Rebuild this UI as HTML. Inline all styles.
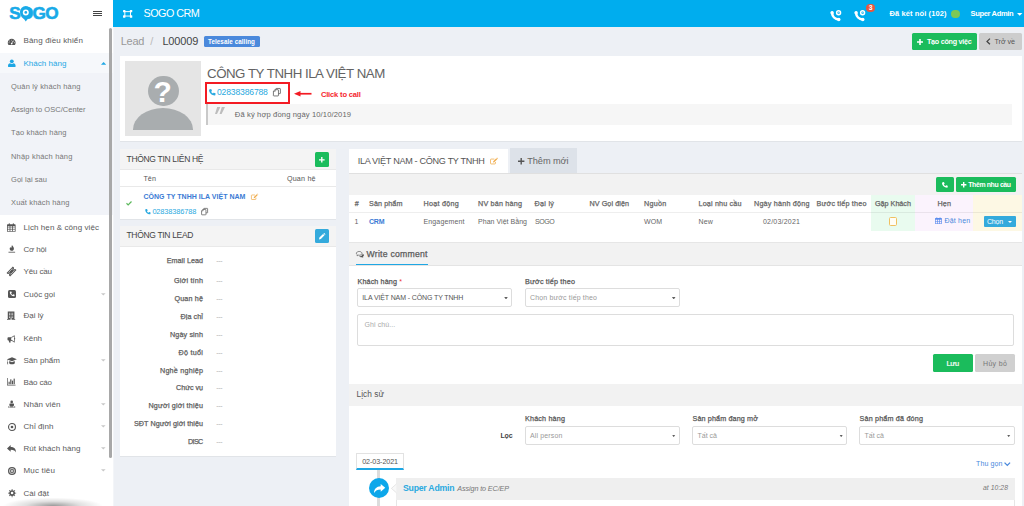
<!DOCTYPE html>
<html lang="vi">
<head>
<meta charset="utf-8">
<title>SOGO CRM - Lead L00009</title>
<style>
*{box-sizing:border-box;margin:0;padding:0}
html,body{width:1024px;height:506px;overflow:hidden}
body{position:relative;background:#edf0f5;font-family:"Liberation Sans",sans-serif;color:#666}
.b{position:absolute;display:block}
.t{position:absolute;white-space:pre;line-height:20px}
svg{position:absolute;overflow:visible}
.sel{position:absolute;height:19px;border:1px solid #ddd;border-radius:2px;background:#fff}
.sel:after{content:"";position:absolute;right:3px;top:7.600px;width:3.600px;height:2.600px;background:#606060;clip-path:polygon(0 0,100% 0,50% 100%)}
.car{position:absolute;border:2px solid transparent;border-top:2.6px solid #c5c5c5}
</style>
</head>
<body>
<!-- ===== top bar ===== -->
<div class="b" id="topbar" style="left:113px;top:0;width:911px;height:27px;background:#00adee"></div>
<div class="b" id="logobox" style="left:0;top:0;width:113px;height:27px;background:#fff"></div>
<!-- ===== sidebar ===== -->
<div class="b" id="sidebar" style="left:0;top:27px;width:114.200px;height:479px;background:#fff;border-right:1.200px solid #f3f5f8"></div>
<div class="b" id="activerow" style="left:0;top:52.5px;width:113px;height:21px;background:#f6f8fb"></div>
<div class="b" id="submenu" style="left:0;top:73px;width:113px;height:141.5px;background:#f1f3f8"></div>
<div class="b" id="sbshadow" style="left:0;top:497px;width:106px;height:9px;background:radial-gradient(ellipse 50px 8.500px at 50% 100%,rgba(0,0,0,.4),rgba(0,0,0,.12) 55%,rgba(0,0,0,0) 100%)"></div>
<div class="b" id="scroll" style="left:108.6px;top:28px;width:3.2px;height:430px;background:#a8a8a8;border-radius:2px"></div>
<div class="b" style="left:93px;top:10.5px;width:9px;height:1.3px;background:#444"></div>
<div class="b" style="left:93px;top:12.8px;width:9px;height:1.3px;background:#444"></div>
<div class="b" style="left:93px;top:15.1px;width:9px;height:1.3px;background:#444"></div>
<svg style="left:6.90px;top:37.90px;width:9.40px;height:7.40px" viewBox="0 0 16 15" ><path fill="#555" d="M8 1.5C3.6 1.5 0 5.1 0 9.5c0 1.6.5 3.200 1.300 4.400.2.300.5.400.8.400h11.800c.3 0 .6-.1.8-.4.8-1.200 1.300-2.800 1.300-4.400C16 5.100 12.400 1.500 8 1.500z"/><circle cx="8" cy="4.300" r="1" fill="#fff"/><circle cx="4" cy="6" r="1" fill="#fff"/><circle cx="12" cy="6" r="1" fill="#fff"/><circle cx="2.600" cy="9.700" r="1" fill="#fff"/><circle cx="13.400" cy="9.700" r="1" fill="#fff"/><path d="M8 11.500L10.500 6" stroke="#fff" stroke-width="1.400" fill="none"/><circle cx="8" cy="11.300" r="1.700" fill="#fff"/></svg>
<svg style="left:7.80px;top:59.10px;width:7.60px;height:8.20px" viewBox="0 0 16 16" ><circle cx="8" cy="4.200" r="4" fill="#1ea7e4"/><path fill="#1ea7e4" d="M1 16c-.6 0-1-.4-1-1v-1.600C0 10.500 2 8.700 4.300 8.500c1 .8 2.300 1.200 3.700 1.200s2.700-.4 3.700-1.200C14 8.700 16 10.500 16 13.400V15c0 .6-.4 1-1 1z"/></svg>
<svg style="left:101px;top:62.3px;width:5.2px;height:2.8px" viewBox="0 0 10 5"><path fill="#1ea7e4" d="M5 0l5 5H0z"/></svg>
<svg style="left:7.40px;top:222.50px;width:8.60px;height:9.00px" viewBox="0 0 16 16" ><path fill="#555" d="M1.200 2h13.600c.7 0 1.200.5 1.200 1.200v11.600c0 .7-.5 1.200-1.200 1.200H1.200C.5 16 0 15.500 0 14.800V3.200C0 2.500.5 2 1.200 2z"/><rect x="3.200" y="0" width="2" height="4" rx="1" fill="#555"/><rect x="10.800" y="0" width="2" height="4" rx="1" fill="#555"/><g fill="#fff"><rect x="1.400" y="5.800" width="3.400" height="2.400"/><rect x="6.300" y="5.800" width="3.400" height="2.400"/><rect x="11.200" y="5.800" width="3.400" height="2.400"/><rect x="1.400" y="9.200" width="3.400" height="2.400"/><rect x="6.300" y="9.200" width="3.400" height="2.400"/><rect x="11.200" y="9.200" width="3.400" height="2.400"/><rect x="1.400" y="12.600" width="3.400" height="2.200"/><rect x="6.300" y="12.600" width="3.400" height="2.200"/><rect x="11.200" y="12.600" width="3.400" height="2.200"/></g></svg>
<svg style="left:7.50px;top:244.40px;width:7.60px;height:9.60px" viewBox="0 0 16 16" ><path fill="#555" d="M8.500 0C9 2.500 12.500 4 12.500 7.800c0 2.600-2 4.400-4.500 4.400S3.500 10.400 3.500 7.800c0-1.600.8-2.800 1.800-3.800 0 1.200.6 2 1.400 2C8.200 6 6.800 3 8.500 0z"/><rect x="1" y="14.300" width="14" height="1.700" fill="#555"/></svg>
<svg style="left:7.20px;top:267.00px;width:9.00px;height:9.00px" viewBox="0 0 16 16" ><g transform="rotate(-45 8 8)"><path fill="#555" d="M0 3.500h16v3a1.500 1.500 0 000 3v3H0v-3a1.500 1.500 0 000-3z"/><rect x="3.500" y="5.500" width="9" height="5" fill="none" stroke="#fff" stroke-width=".9"/></g></svg>
<svg style="left:7.60px;top:290.00px;width:8.00px;height:8.00px" viewBox="0 0 16 16" ><rect x="0" y="0" width="16" height="16" rx="3" fill="#555"/><path fill="#fff" d="M4 3.300l2-.5c.3-.1.500.1.600.3l.9 2.200c.1.200 0 .5-.2.600L6.200 6.800c.7 1.400 1.800 2.500 3.100 3.100l.900-1.100c.2-.2.400-.3.600-.2l2.200.9c.2.100.4.300.3.600l-.5 2c-.1.200-.3.400-.5.400C7.500 12.500 3.600 8.600 3.600 3.800c0-.2.200-.4.400-.5z"/></svg>
<svg style="left:7.40px;top:311.30px;width:8.20px;height:9.40px" viewBox="0 0 16 16" ><path fill="#555" d="M1.500 0h13v14.500H16V16H0v-1.500h1.500z"/><g fill="#fff"><rect x="4" y="2.4" width="1.700" height="1.500"/><rect x="7.15" y="2.4" width="1.700" height="1.500"/><rect x="10.3" y="2.4" width="1.700" height="1.500"/><rect x="4" y="5.2" width="1.700" height="1.500"/><rect x="7.15" y="5.2" width="1.700" height="1.500"/><rect x="10.3" y="5.2" width="1.700" height="1.500"/><rect x="4" y="8" width="1.700" height="1.500"/><rect x="7.15" y="8" width="1.700" height="1.500"/><rect x="10.3" y="8" width="1.700" height="1.500"/><rect x="4" y="10.8" width="1.700" height="1.500"/><rect x="7.15" y="10.8" width="1.700" height="1.500"/><rect x="10.3" y="10.8" width="1.700" height="1.500"/><rect x="6.800" y="13.200" width="2.400" height="2.800"/></g></svg>
<svg style="left:7.30px;top:334.60px;width:9.00px;height:8.00px" viewBox="0 0 16 15" ><path fill="#555" d="M13 0.500c.6 0 1 .4 1 1v4.300c.6.200 1 .7 1 1.400s-.4 1.200-1 1.400v4.300c0 .6-.4 1-1 1-2-1.800-4.200-3-6.800-3.300-.4.600-.3 1.300.100 1.800.3.400.3.800 0 1.100l-.8.800c-.3.300-.8.300-1.100 0C3.200 13 2.700 11.600 3 10.500H2c-.8 0-1.500-.7-1.500-1.500V5.500C.5 4.700 1.200 4 2 4h4C8.700 3.800 11 2.400 13 .5z"/><path fill="#fff" d="M12.800 2.300v9.800C11.200 10.800 9.400 9.900 7.500 9.600V4.900C9.400 4.600 11.200 3.700 12.800 2.300z"/></svg>
<svg style="left:6.70px;top:356.80px;width:10.00px;height:7.60px" viewBox="0 0 16 12.500" ><path fill="#555" d="M8 .5L16 3.800 8 7.200 1.200 4.400V8c.3.200.5.500.5.900 0 .3-.2.600-.4.800L1.800 12H0l.5-2.300C.2 9.500.1 9.200.1 8.900c0-.4.200-.7.500-.9V4.100L0 3.800z"/><path fill="#555" d="M3.600 6.700L8 8.500l4.400-1.800.3 3.100C12.700 11 10.600 12 8 12s-4.700-1-4.700-2.200z"/></svg>
<svg style="left:7.30px;top:378.30px;width:8.60px;height:7.40px" viewBox="0 0 16 14" ><path fill="#555" d="M0 0h1.300v12.700H16V14H0z"/><rect x="2.800" y="7" width="2.200" height="4.700" fill="#555"/><rect x="6" y="2.500" width="2.200" height="9.200" fill="#555"/><rect x="9.200" y="5" width="2.200" height="6.700" fill="#555"/><rect x="12.400" y="1.200" width="2.200" height="10.500" fill="#555"/></svg>
<svg style="left:7.90px;top:399.90px;width:7.40px;height:8.60px" viewBox="0 0 16 16" ><circle cx="8" cy="2.800" r="2.800" fill="#555"/><path fill="#555" d="M4.300 6.500h7.400c.8 0 1.300.6 1.300 1.300v3.200h-1.500V13.500h-7V11H3V7.800c0-.7.500-1.300 1.300-1.300z"/><path fill="#555" d="M3.300 11.500v1.200C2 13 1.500 13.300 1.500 13.600c0 .6 2.800 1.200 6.500 1.200s6.500-.6 6.500-1.200c0-.3-.5-.6-1.800-.9v-1.200c2 .4 3.300 1.100 3.300 2.100C16 15.200 12.400 16 8 16s-8-.8-8-2.400c0-1 1.300-1.700 3.300-2.100z"/></svg>
<svg style="left:7.60px;top:422.60px;width:8.00px;height:8.00px" viewBox="0 0 16 16" ><circle cx="8" cy="8" r="6.900" fill="none" stroke="#555" stroke-width="2.200"/><circle cx="8" cy="8" r="2.700" fill="#555"/></svg>
<svg style="left:7.20px;top:444.60px;width:9.00px;height:7.60px" viewBox="0 0 16 13.500" ><path fill="#555" d="M6.500 0v3.500C12.500 3.500 16 6 16 13.500c-1.500-3.500-4-5-9.500-5V12L0 6z"/></svg>
<svg style="left:7.60px;top:466.60px;width:8.00px;height:8.00px" viewBox="0 0 16 16" ><circle cx="8" cy="8" r="8" fill="#555"/><circle cx="8" cy="8" r="5.200" fill="none" stroke="#fff" stroke-width="1.300"/><circle cx="8" cy="8" r="2.600" fill="#fff"/><circle cx="8" cy="8" r="1.300" fill="#555"/></svg>
<svg style="left:7.50px;top:488.90px;width:8.20px;height:8.20px" viewBox="0 0 16 16" ><polygon fill="#555" points="15.95,7.15 15.95,8.85 13.77,8.62 12.51,11.64 14.23,13.02 13.02,14.23 11.64,12.51 8.62,13.77 8.85,15.95 7.15,15.95 7.38,13.77 4.36,12.51 2.98,14.23 1.77,13.02 3.49,11.64 2.23,8.62 0.05,8.85 0.05,7.15 2.23,7.38 3.49,4.36 1.77,2.98 2.98,1.77 4.36,3.49 7.38,2.23 7.15,0.05 8.85,0.05 8.62,2.23 11.64,3.49 13.02,1.77 14.23,2.98 12.51,4.36 13.77,7.38"/><circle cx="8" cy="8" r="2.500" fill="#fff"/></svg>
<svg style="left:101.3px;top:292.8px;width:4.6px;height:2.6px" viewBox="0 0 10 5"><path fill="#c8c8c8" d="M0 0h10L5 5z"/></svg>
<svg style="left:101.3px;top:358.8px;width:4.6px;height:2.6px" viewBox="0 0 10 5"><path fill="#c8c8c8" d="M0 0h10L5 5z"/></svg>
<svg style="left:101.3px;top:403.3px;width:4.6px;height:2.6px" viewBox="0 0 10 5"><path fill="#c8c8c8" d="M0 0h10L5 5z"/></svg>
<svg style="left:101.3px;top:425.3px;width:4.6px;height:2.6px" viewBox="0 0 10 5"><path fill="#c8c8c8" d="M0 0h10L5 5z"/></svg>
<svg style="left:101.3px;top:447.3px;width:4.6px;height:2.6px" viewBox="0 0 10 5"><path fill="#c8c8c8" d="M0 0h10L5 5z"/></svg>
<svg style="left:101.3px;top:469.3px;width:4.6px;height:2.6px" viewBox="0 0 10 5"><path fill="#c8c8c8" d="M0 0h10L5 5z"/></svg>

<!-- ===== main ===== -->
<!-- breadcrumb badge + buttons -->
<div class="b" id="badge" style="left:204px;top:36.4px;width:55.5px;height:10.4px;background:#4a89dc;border-radius:1.5px"></div>
<div class="b" id="btn-task" style="left:911.6px;top:32.5px;width:65.8px;height:17.3px;background:#1bbc5c;border-radius:1.5px"></div>
<div class="b" id="btn-back" style="left:978.8px;top:32.5px;width:42.8px;height:17.3px;background:#cdcdcd;border-radius:1.5px"></div>
<!-- profile card -->
<div class="b" id="profile" style="left:120.3px;top:56px;width:901.7px;height:86.2px;background:#fff;border-bottom:1px solid #e1e4e8"></div>
<div class="b" id="avatar" style="left:125.2px;top:61.1px;width:75.7px;height:75.4px;background:#e5e5e5;overflow:hidden">
  <div class="b" style="left:22.7px;top:14.5px;width:30.8px;height:30.8px;border-radius:50%;background:#a9adaf"></div>
  <div class="b" style="left:8.1px;top:47.2px;width:60px;height:42.800px;border-radius:50%;background:#a9adaf"></div>
  <div class="b" style="left:0;top:68.6px;width:76px;height:8px;background:#e5e5e5"></div>
</div>
<div class="b" id="quote" style="left:206.4px;top:103.5px;width:805.3px;height:21.1px;background:#f6f6f6;border-left:2.300px solid #c9c9c9"></div>
<div class="b" id="redbox" style="left:205px;top:81.700px;width:85px;height:22px;border:2px solid #f31b23"></div>
<!-- contact panel -->
<div class="b" id="p-contact" style="left:119.8px;top:149px;width:216.100px;height:71px;background:#fff;border-bottom:1px solid #e1e4e8"></div>
<div class="b" style="left:119.8px;top:149px;width:216.100px;height:21px;background:#f4f4f4;border-bottom:1px solid #e9e9e9"></div>
<div class="b" style="left:119.8px;top:186px;width:216.100px;height:1px;background:#e9e9e9"></div>
<div class="b" id="btn-add" style="left:315px;top:152.3px;width:14.4px;height:14.6px;background:#1bbc5c;border-radius:1.5px"></div>
<!-- lead panel -->
<div class="b" id="p-lead" style="left:119.8px;top:226px;width:216.100px;height:230.5px;background:#fff;border-bottom:1px solid #e1e4e8"></div>
<div class="b" style="left:119.8px;top:226px;width:216.100px;height:21px;background:#f4f4f4;border-bottom:1px solid #e9e9e9"></div>
<div class="b" id="btn-edit" style="left:314.6px;top:228.7px;width:14.8px;height:14.8px;background:#34aadc;border-radius:1.5px"></div>
<!-- tabs -->
<div class="b" id="tab1" style="left:349.2px;top:149.1px;width:159.1px;height:24.5px;background:#fff"></div>
<div class="b" id="tab2" style="left:510px;top:148.400px;width:67.4px;height:24.900px;background:#dde2e9"></div>
<div class="b" id="tabpane" style="left:349px;top:173.2px;width:673px;height:332.8px;background:#f2f2f2;border-top:1px solid #e0e0e0"></div>
<div class="b" id="btn-phone" style="left:936px;top:177.3px;width:18.2px;height:15px;background:#1bbc5c;border-radius:1.5px"></div>
<div class="b" id="btn-need" style="left:956.2px;top:177.3px;width:59.7px;height:15px;background:#1bbc5c;border-radius:1.5px"></div>
<!-- table -->
<div class="b" id="tbl" style="left:349px;top:194.9px;width:673px;height:47.1px;background:#fff"></div>
<div class="b" style="left:871px;top:194.9px;width:43.8px;height:35.7px;background:#e9fbef"></div>
<div class="b" style="left:914.8px;top:194.9px;width:58.2px;height:35.7px;background:#fbf3fd"></div>
<div class="b" style="left:973px;top:194.9px;width:49px;height:35.7px;background:#fdf8e4"></div>
<div class="b" style="left:349px;top:212.2px;width:673px;height:1px;background:rgba(0,0,0,.065)"></div>
<div class="b" id="chk" style="left:888.7px;top:217.2px;width:8.7px;height:8.7px;border:1.2px solid #f0c060;border-radius:1.6px;background:#fffdf6"></div>
<div class="b" id="btn-chon" style="left:984px;top:215.8px;width:32.3px;height:11.7px;background:#34aadc;border-radius:1px"></div>
<!-- write comment -->
<div class="b" style="left:349px;top:242px;width:673px;height:1px;background:#e6e6e6"></div>
<div class="b" id="wc-body" style="left:349px;top:265px;width:673px;height:119px;background:#fff;border-top:1px solid #e4e4e4"></div>
<div class="b" id="wc-line" style="left:355.7px;top:263.5px;width:72.3px;height:1.5px;background:#1ea7e4"></div>
<div class="sel" style="left:357.3px;top:288.3px;width:154.5px"></div>
<div class="sel" style="left:525px;top:288.3px;width:154.5px"></div>
<div class="b" id="txtarea" style="left:357.3px;top:314px;width:657px;height:31.5px;border:1px solid #ddd;border-radius:2px;background:#fff"></div>
<div class="b" id="btn-save" style="left:932.5px;top:354.100px;width:40.2px;height:17.900px;background:#1bbc5c;border-radius:1.5px"></div>
<div class="b" id="btn-cancel" style="left:975px;top:354.100px;width:40.200px;height:17.900px;background:#d0d0d0;border-radius:1.5px"></div>
<!-- history -->
<div class="b" id="hist-body" style="left:349px;top:405.5px;width:673px;height:100.5px;background:#fff"></div>
<div class="sel" style="left:525px;top:426px;width:154.5px"></div>
<div class="sel" style="left:692px;top:426px;width:155px"></div>
<div class="sel" style="left:859px;top:426px;width:155.500px"></div>
<div class="b" id="tl-line" style="left:377.4px;top:470px;width:2.6px;height:36px;background:#dcdcdc"></div>
<div class="b" id="datebox" style="left:355.7px;top:453.3px;width:48.700px;height:17px;border:1px solid #e2e2e2;border-bottom:2px solid #1ea7e4;background:#fff"></div>
<div class="b" id="entry" style="left:396.2px;top:478.1px;width:618.4px;height:28px;background:#fff;border-left:1px solid #e6e6e6;border-right:1px solid #e6e6e6"></div>
<div class="b" id="entry-h" style="left:396.2px;top:478.1px;width:618.4px;height:21.700px;background:#efefef"></div>
<svg style="left:391.200px;top:483.800px;width:5.400px;height:8.800px" viewBox="0 0 5.400 8.800"><path d="M5.400 0L.4 4.400l5 4.400" fill="#f8f8f8" stroke="#dcdcdc" stroke-width=".7"/></svg>
<div class="b" id="tl-dot" style="left:368.8px;top:478.3px;width:20.200px;height:20.200px;border-radius:50%;background:#0da7ea"></div>

<!-- header frame icon -->
<svg style="left:122.7px;top:10.2px;width:9.3px;height:7.7px" viewBox="0 0 18 15"><rect x="3.500" y="3.200" width="11" height="8.600" fill="none" stroke="#fff" stroke-width="1.900"/><rect x="0" y="0" width="4.600" height="4.600" rx="1" fill="#fff"/><rect x="13.400" y="0" width="4.600" height="4.600" rx="1" fill="#fff"/><rect x="0" y="10.400" width="4.600" height="4.600" rx="1" fill="#fff"/><rect x="13.400" y="10.400" width="4.600" height="4.600" rx="1" fill="#fff"/></svg>
<!-- header phones -->
<svg style="left:829.8px;top:9.5px;width:12px;height:12px" viewBox="0 0 12 12"><path d="M2 2.800C2.300 6.200 5 9.200 8.800 9.600" fill="none" stroke="#fff" stroke-width="2.500" stroke-linecap="round"/><circle cx="2.100" cy="2.800" r="1.700" fill="#fff"/><circle cx="8.800" cy="9.500" r="1.700" fill="#fff"/><circle cx="8.600" cy="2.800" r="1.950" fill="none" stroke="#fff" stroke-width="1.500"/><path d="M7.800 3.300L9.400 2.100" stroke="#fff" stroke-width=".7" fill="none"/></svg>
<svg style="left:854.1px;top:9.5px;width:12px;height:12px" viewBox="0 0 12 12"><path d="M2 2.800C2.300 6.200 5 9.200 8.800 9.600" fill="none" stroke="#fff" stroke-width="2.500" stroke-linecap="round"/><circle cx="2.100" cy="2.800" r="1.700" fill="#fff"/><circle cx="8.800" cy="9.500" r="1.700" fill="#fff"/><circle cx="8.600" cy="2.800" r="1.950" fill="none" stroke="#fff" stroke-width="1.500"/><path d="M7.800 3.300L9.400 2.100" stroke="#fff" stroke-width=".7" fill="none"/></svg>
<div class="b" id="hbadge" style="left:866.2px;top:4.3px;width:8.900px;height:7.900px;border-radius:4px;background:#e9573f"></div>
<div class="b" id="gdot" style="left:951.4px;top:9.9px;width:8.2px;height:8.2px;border-radius:50%;background:#7dc855"></div>
<svg style="left:1017.1px;top:12.5px;width:5.4px;height:2.800px" viewBox="0 0 10 5"><path fill="#fff" d="M0 0h10L5 5z"/></svg>
<!-- phone (profile) -->
<svg style="left:208.600px;top:88.900px;width:6.600px;height:6.600px" viewBox="0 0 16 16"><path fill="#29a9e0" d="M1.500 1.100L4.500.200c.5-.1.900.1 1.100.5l1.500 3.400c.2.400 0 .9-.3 1.100L5 6.600c1.100 2.100 2.600 3.600 4.600 4.600l1.400-1.800c.3-.3.700-.4 1.100-.3l3.400 1.500c.4.200.6.600.5 1.100l-.9 3.300c-.1.400-.5.700-.9.700C6.500 15.700 0 9.200 0 2c0-.4.300-.8.700-.9z"/></svg>
<!-- copy (profile) -->
<svg style="left:273.4px;top:88.3px;width:7.8px;height:8.4px" viewBox="0 0 15 16"><path d="M5.500 3.500V1.300c0-.3.200-.5.500-.5h7.700c.3 0 .5.200.5.500v9c0 .3-.2.500-.5.500H10.500" fill="none" stroke="#555" stroke-width="1.500"/><path d="M1.300 5.500L3.800 3.200h6.200c.3 0 .5.200.5.500v11c0 .3-.2.500-.5.500H1.300c-.3 0-.5-.2-.5-.5V6z" fill="#fff" stroke="#555" stroke-width="1.500"/><path d="M4.300 3.500v2.800H1" fill="none" stroke="#555" stroke-width="1.200"/></svg>
<!-- red arrow -->
<svg style="left:293.900px;top:91.200px;width:17.500px;height:5.500px" viewBox="0 0 17.500 5.500"><path d="M0 2.750L6.500 0v5.500z" fill="#f31b23"/><rect x="5" y="1.900" width="12.500" height="1.700" fill="#f31b23"/></svg>
<!-- quote -->
<svg style="left:215.3px;top:107.3px;width:9.4px;height:7.1px" viewBox="0 0 9.400 7.100"><path fill="#bdbdbd" d="M2.200 0h3.200L2 7.100H0zM6.800 0H10L6.600 7.100H4.600z"/></svg>
<!-- plus in green button -->
<svg style="left:319.4px;top:156.8px;width:5.6px;height:5.6px" viewBox="0 0 10 10"><path fill="#fff" d="M3.800 0h2.400v3.800H10v2.400H6.200V10H3.800V6.200H0V3.800h3.800z"/></svg>
<!-- pencil in blue button -->
<svg style="left:318.8px;top:232.9px;width:6.4px;height:6.4px" viewBox="0 0 10 10"><path fill="#fff" d="M0 10l.6-2.900L6.300 1.400l2.300 2.300-5.700 5.700zM7 .7l.5-.5c.3-.3.800-.3 1.100 0l1.200 1.200c.3.300.3.800 0 1.100l-.5.500z"/></svg>
<!-- check -->
<svg style="left:125.9px;top:200.6px;width:6px;height:4.6px" viewBox="0 0 12 9"><path fill="none" stroke="#5cb85c" stroke-width="2.400" d="M1 4.500L4.300 7.600 11 1"/></svg>
<!-- edit (contact) -->
<svg style="left:251px;top:194px;width:7.4px;height:5.9px" viewBox="0 0 15 12"><path fill="none" stroke="#f0ad4e" stroke-width="1.500" d="M10 7.500v2.700c0 .6-.4 1-1 1H1.800c-.6 0-1-.4-1-1V3c0-.6.400-1 1-1H8"/><path fill="#f0ad4e" d="M5.500 8.500l.4-2.300L11.600.5l1.900 1.900-5.700 5.700zM12.300-.2l.7-.7 1.900 1.900-.7.700z"/></svg>
<!-- phone (contact) -->
<svg style="left:144.5px;top:208.5px;width:5.9px;height:5.4px" viewBox="0 0 16 16"><path fill="#29a9e0" d="M1.500 1.100L4.500.200c.5-.1.900.1 1.100.5l1.500 3.400c.2.400 0 .9-.3 1.100L5 6.600c1.100 2.100 2.600 3.600 4.600 4.600l1.400-1.800c.3-.3.700-.4 1.100-.3l3.400 1.500c.4.200.6.600.5 1.100l-.9 3.300c-.1.400-.5.700-.9.700C6.500 15.700 0 9.200 0 2c0-.4.300-.8.700-.9z"/></svg>
<!-- copy (contact) -->
<svg style="left:201.1px;top:207.6px;width:7.2px;height:7.2px" viewBox="0 0 15 16"><path d="M5.500 3.500V1.300c0-.3.200-.5.500-.5h7.700c.3 0 .5.200.5.500v9c0 .3-.2.500-.5.500H10.500" fill="none" stroke="#555" stroke-width="1.600"/><path d="M1.300 5.500L3.800 3.200h6.200c.3 0 .5.200.5.500v11c0 .3-.2.500-.5.500H1.300c-.3 0-.5-.2-.5-.5V6z" fill="#fff" stroke="#555" stroke-width="1.600"/><path d="M4.300 3.500v2.800H1" fill="none" stroke="#555" stroke-width="1.300"/></svg>
<!-- edit (tab) -->
<svg style="left:489.7px;top:157.5px;width:8.2px;height:6.4px" viewBox="0 0 15 12"><path fill="none" stroke="#f0ad4e" stroke-width="1.500" d="M10 7.500v2.700c0 .6-.4 1-1 1H1.800c-.6 0-1-.4-1-1V3c0-.6.400-1 1-1H8"/><path fill="#f0ad4e" d="M5.500 8.500l.4-2.300L11.600.5l1.900 1.900-5.700 5.700zM12.300-.2l.7-.7 1.900 1.900-.7.700z"/></svg>
<!-- plus (tab2) -->
<svg style="left:518.4px;top:157.600px;width:6.400px;height:6.400px" viewBox="0 0 10 10"><path fill="#555" d="M3.900 0h2.200v3.900H10v2.200H6.100V10H3.900V6.100H0V3.900h3.900z"/></svg>
<!-- phone in green button -->
<svg style="left:942.2px;top:181.9px;width:5.8px;height:5.8px" viewBox="0 0 16 16"><path fill="#fff" d="M1.500 1.100L4.500.200c.5-.1.900.1 1.100.5l1.500 3.400c.2.400 0 .9-.3 1.100L5 6.600c1.100 2.100 2.600 3.600 4.600 4.600l1.400-1.800c.3-.3.700-.4 1.100-.3l3.400 1.500c.4.200.6.600.5 1.100l-.9 3.300c-.1.400-.5.700-.9.700C6.500 15.700 0 9.200 0 2c0-.4.300-.8.700-.9z"/></svg>
<!-- plus (them nhu cau) -->
<svg style="left:960.9px;top:182.1px;width:5.4px;height:5.4px" viewBox="0 0 10 10"><path fill="#fff" d="M3.700 0h2.600v3.700H10v2.600H6.300V10H3.700V6.300H0V3.700h3.700z"/></svg>
<!-- plus (tao cong viec) -->
<svg style="left:917.2px;top:38.600px;width:6px;height:6px" viewBox="0 0 10 10"><path fill="#fff" d="M3.700 0h2.600v3.700H10v2.600H6.300V10H3.700V6.300H0V3.700h3.700z"/></svg>
<!-- chevron left (tro ve) -->
<svg style="left:985.7px;top:38.100px;width:4.600px;height:6.800px" viewBox="0 0 7 10"><path fill="none" stroke="#444" stroke-width="2" d="M6 .8L1.600 5 6 9.200"/></svg>
<!-- calendar (dat hen) -->
<svg style="left:934.8px;top:216.6px;width:6.900px;height:7.300px" viewBox="0 0 16 16"><path fill="#5b8def" d="M1.200 2h13.600c.7 0 1.200.5 1.200 1.200v11.600c0 .7-.5 1.200-1.200 1.200H1.200C.5 16 0 15.500 0 14.800V3.200C0 2.500.5 2 1.200 2z"/><rect x="3.200" y="0" width="2.200" height="4" rx="1" fill="#5b8def"/><rect x="10.600" y="0" width="2.200" height="4" rx="1" fill="#5b8def"/><g fill="#fbf0fc"><rect x="1.500" y="5.800" width="3.300" height="3.800"/><rect x="6.300" y="5.800" width="3.400" height="3.800"/><rect x="11.200" y="5.800" width="3.300" height="3.800"/><rect x="1.500" y="10.800" width="3.300" height="3.700"/><rect x="6.300" y="10.800" width="3.400" height="3.700"/><rect x="11.200" y="10.800" width="3.300" height="3.700"/></g></svg>
<!-- caret (chon) -->
<svg style="left:1007.8px;top:221px;width:4px;height:2.200px" viewBox="0 0 10 5"><path fill="#fff" d="M0 0h10L5 5z"/></svg>
<!-- comments icon -->
<svg style="left:355.7px;top:250.7px;width:8.300px;height:6.500px" viewBox="0 0 17 13"><path fill="none" stroke="#555" stroke-width="1.400" d="M6.500.8c3.200 0 5.700 1.700 5.700 3.900S9.700 8.600 6.500 8.600c-.6 0-1.200-.1-1.700-.2-.8.600-1.800 1-2.800 1.100.5-.5.900-1.100 1-1.700C1.700 7.100.8 6 .8 4.700.8 2.500 3.300.8 6.500.8z"/><path fill="#555" d="M13.500 5.500c1.600.7 2.700 1.900 2.700 3.300 0 1.200-.8 2.300-2.100 3 .1.600.5 1.200 1 1.700-1-.1-2-.5-2.800-1.100-.5.100-1.100.2-1.700.2-1.900 0-3.600-.7-4.600-1.700 4.200.2 7.500-2 7.500-5.400z"/></svg>
<!-- chevron down (thu gon) -->
<svg style="left:1003.8px;top:461.5px;width:6.6px;height:4.600px" viewBox="0 0 10 7"><path fill="none" stroke="#4a89dc" stroke-width="2" d="M.8 1l4.200 4.200L9.200 1"/></svg>
<!-- share arrow in circle -->
<svg style="left:373.7px;top:484px;width:11.3px;height:9.1px" viewBox="0 0 16 13"><path fill="#fff" d="M9.500 0L16 5.500 9.500 11V7.700C5 7.700 2 9 0 13c0-6 3.500-9.300 9.500-9.700z"/></svg>

<span class="t" style="left:9.30px;top:3px;font-size:17.2px;color:#19aae8;font-weight:700;letter-spacing:-0.765px;-webkit-text-stroke:0.6px #19aae8;">SOGO</span>
<span class="t" style="left:143.60px;top:3px;font-size:10.8px;color:#fff;letter-spacing:-0.545px;">SOGO CRM</span>
<span class="t" style="left:889.50px;top:4px;font-size:7.5px;color:#fff;font-weight:700;letter-spacing:0.101px;">Đã kết nối (102)</span>
<span class="t" style="left:970.50px;top:4px;font-size:7.5px;color:#fff;font-weight:700;letter-spacing:-0.324px;">Super Admin</span>
<span class="t" style="left:868.81px;top:-2px;font-size:6.8px;color:#fff;font-weight:700;">3</span>
<span class="t" style="left:23.50px;top:31px;font-size:8px;color:#5a5a5a;letter-spacing:0.145px;">Bảng điều khiển</span>
<span class="t" style="left:23.50px;top:54px;font-size:8px;color:#1ea7e4;letter-spacing:0.031px;">Khách hàng</span>
<span class="t" style="left:11.00px;top:77px;font-size:7.5px;color:#777;letter-spacing:0.159px;">Quản lý khách hàng</span>
<span class="t" style="left:11.00px;top:100px;font-size:7.5px;color:#777;letter-spacing:0.037px;">Assign to OSC/Center</span>
<span class="t" style="left:11.00px;top:123px;font-size:7.5px;color:#777;letter-spacing:0.126px;">Tạo khách hàng</span>
<span class="t" style="left:11.00px;top:147px;font-size:7.5px;color:#777;letter-spacing:0.186px;">Nhập khách hàng</span>
<span class="t" style="left:11.00px;top:170px;font-size:7.5px;color:#777;letter-spacing:0.054px;">Gọi lại sau</span>
<span class="t" style="left:11.00px;top:193px;font-size:7.5px;color:#777;letter-spacing:0.152px;">Xuất khách hàng</span>
<span class="t" style="left:23.50px;top:218px;font-size:8px;color:#5a5a5a;letter-spacing:0.086px;">Lịch hẹn &amp; công việc</span>
<span class="t" style="left:23.50px;top:240px;font-size:8px;color:#5a5a5a;letter-spacing:-0.168px;">Cơ hội</span>
<span class="t" style="left:23.50px;top:262px;font-size:8px;color:#5a5a5a;letter-spacing:-0.132px;">Yêu cầu</span>
<span class="t" style="left:23.50px;top:285px;font-size:8px;color:#5a5a5a;letter-spacing:-0.010px;">Cuộc gọi</span>
<span class="t" style="left:23.50px;top:306px;font-size:8px;color:#5a5a5a;">Đại lý</span>
<span class="t" style="left:23.50px;top:329px;font-size:8px;color:#5a5a5a;letter-spacing:-0.054px;">Kênh</span>
<span class="t" style="left:23.50px;top:351px;font-size:8px;color:#5a5a5a;">Sản phẩm</span>
<span class="t" style="left:23.50px;top:373px;font-size:8px;color:#5a5a5a;letter-spacing:-0.132px;">Báo cáo</span>
<span class="t" style="left:23.50px;top:395px;font-size:8px;color:#5a5a5a;letter-spacing:0.114px;">Nhân viên</span>
<span class="t" style="left:23.50px;top:417px;font-size:8px;color:#5a5a5a;letter-spacing:0.085px;">Chỉ định</span>
<span class="t" style="left:23.50px;top:439px;font-size:8px;color:#5a5a5a;letter-spacing:0.071px;">Rút khách hàng</span>
<span class="t" style="left:23.50px;top:461px;font-size:8px;color:#5a5a5a;letter-spacing:0.169px;">Mục tiêu</span>
<span class="t" style="left:23.50px;top:484px;font-size:8px;color:#5a5a5a;letter-spacing:0.022px;">Cài đặt</span>
<span class="t" style="left:120.70px;top:31px;font-size:11px;color:#999;letter-spacing:-0.253px;">Lead</span>
<span class="t" style="left:150.22px;top:31px;font-size:11px;color:#bbb;">/</span>
<span class="t" style="left:162.40px;top:31px;font-size:11px;color:#444;letter-spacing:-0.167px;">L00009</span>
<span class="t" style="left:208.00px;top:32px;font-size:6.3px;color:#fff;font-weight:700;letter-spacing:0.058px;">Telesale calling</span>
<span class="t" style="left:927.00px;top:32px;font-size:7.2px;color:#fff;font-weight:700;letter-spacing:-0.275px;">Tạo công việc</span>
<span class="t" style="left:994.50px;top:32px;font-size:7.2px;color:#555;letter-spacing:-0.060px;">Trở về</span>
<span class="t" style="left:153.44px;top:82px;font-size:30px;color:#fff;font-weight:700;">?</span>
<span class="t" style="left:207.00px;top:64px;font-size:13.3px;color:#636363;letter-spacing:-0.476px;">CÔNG TY TNHH ILA VIỆT NAM</span>
<span class="t" style="left:217.00px;top:82px;font-size:8.6px;color:#29a9e0;letter-spacing:-0.169px;">02838386788</span>
<span class="t" style="left:320.90px;top:85px;font-size:7.6px;color:#f5262e;font-weight:700;letter-spacing:-0.185px;">Click to call</span>
<span class="t" style="left:234.80px;top:105px;font-size:7.6px;color:#666;letter-spacing:0.124px;">Đã ký hợp đồng ngày 10/10/2019</span>
<span class="t" style="left:126.50px;top:149px;font-size:8.5px;color:#444;letter-spacing:-0.311px;">THÔNG TIN LIÊN HỆ</span>
<span class="t" style="left:143.40px;top:169px;font-size:7.2px;color:#555;letter-spacing:0.084px;">Tên</span>
<span class="t" style="left:286.90px;top:169px;font-size:7.2px;color:#555;letter-spacing:0.188px;">Quan hệ</span>
<span class="t" style="left:143.40px;top:187px;font-size:7px;color:#3a7bd5;font-weight:700;letter-spacing:0.020px;">CÔNG TY TNHH ILA VIỆT NAM</span>
<span class="t" style="left:152.40px;top:202px;font-size:7.4px;color:#29a9e0;letter-spacing:-0.135px;">02838386788</span>
<span class="t" style="left:126.50px;top:225px;font-size:8.5px;color:#444;letter-spacing:-0.331px;">THÔNG TIN LEAD</span>
<span class="t" style="left:166.75px;top:251px;font-size:7.2px;color:#606060;letter-spacing:0.030px;-webkit-text-stroke:0.25px;">Email Lead</span>
<span class="t" style="left:216.30px;top:251px;font-size:7px;color:#b0b0b0;letter-spacing:-0.400px;">---</span>
<span class="t" style="left:174.00px;top:271px;font-size:7.2px;color:#606060;letter-spacing:0.178px;-webkit-text-stroke:0.25px;">Giới tính</span>
<span class="t" style="left:216.30px;top:271px;font-size:7px;color:#b0b0b0;letter-spacing:-0.400px;">---</span>
<span class="t" style="left:174.50px;top:289px;font-size:7.2px;color:#606060;letter-spacing:0.142px;-webkit-text-stroke:0.25px;">Quan hệ</span>
<span class="t" style="left:216.30px;top:289px;font-size:7px;color:#b0b0b0;letter-spacing:-0.400px;">---</span>
<span class="t" style="left:180.50px;top:307px;font-size:7.2px;color:#606060;letter-spacing:0.079px;-webkit-text-stroke:0.25px;">Địa chỉ</span>
<span class="t" style="left:216.30px;top:307px;font-size:7px;color:#b0b0b0;letter-spacing:-0.400px;">---</span>
<span class="t" style="left:170.00px;top:325px;font-size:7.2px;color:#606060;letter-spacing:0.121px;-webkit-text-stroke:0.25px;">Ngày sinh</span>
<span class="t" style="left:216.30px;top:325px;font-size:7px;color:#b0b0b0;letter-spacing:-0.400px;">---</span>
<span class="t" style="left:178.50px;top:343px;font-size:7.2px;color:#606060;letter-spacing:0.264px;-webkit-text-stroke:0.25px;">Độ tuổi</span>
<span class="t" style="left:216.30px;top:343px;font-size:7px;color:#b0b0b0;letter-spacing:-0.400px;">---</span>
<span class="t" style="left:160.00px;top:361px;font-size:7.2px;color:#606060;letter-spacing:0.213px;-webkit-text-stroke:0.25px;">Nghề nghiệp</span>
<span class="t" style="left:216.30px;top:361px;font-size:7px;color:#b0b0b0;letter-spacing:-0.400px;">---</span>
<span class="t" style="left:176.00px;top:378px;font-size:7.2px;color:#606060;letter-spacing:-0.029px;-webkit-text-stroke:0.25px;">Chức vụ</span>
<span class="t" style="left:216.30px;top:378px;font-size:7px;color:#b0b0b0;letter-spacing:-0.400px;">---</span>
<span class="t" style="left:148.50px;top:396px;font-size:7.2px;color:#606060;letter-spacing:0.174px;-webkit-text-stroke:0.25px;">Người giới thiệu</span>
<span class="t" style="left:216.30px;top:396px;font-size:7px;color:#b0b0b0;letter-spacing:-0.400px;">---</span>
<span class="t" style="left:134.00px;top:414px;font-size:7.2px;color:#606060;letter-spacing:0.049px;-webkit-text-stroke:0.25px;">SĐT Người giới thiệu</span>
<span class="t" style="left:216.30px;top:414px;font-size:7px;color:#b0b0b0;letter-spacing:-0.400px;">---</span>
<span class="t" style="left:188.00px;top:432px;font-size:7.2px;color:#606060;letter-spacing:-0.625px;-webkit-text-stroke:0.25px;">DISC</span>
<span class="t" style="left:216.30px;top:432px;font-size:7px;color:#b0b0b0;letter-spacing:-0.400px;">---</span>
<span class="t" style="left:357.70px;top:151px;font-size:9.1px;color:#555;letter-spacing:-0.312px;">ILA VIỆT NAM - CÔNG TY TNHH</span>
<span class="t" style="left:527.30px;top:151px;font-size:9.2px;color:#666;letter-spacing:-0.075px;">Thêm mới</span>
<span class="t" style="left:354.75px;top:194px;font-size:7.2px;color:#666;-webkit-text-stroke:0.25px;">#</span>
<span class="t" style="left:369.00px;top:194px;font-size:7.2px;color:#666;letter-spacing:0.098px;-webkit-text-stroke:0.25px;">Sản phẩm</span>
<span class="t" style="left:423.50px;top:194px;font-size:7.2px;color:#666;letter-spacing:0.274px;-webkit-text-stroke:0.25px;">Hoạt động</span>
<span class="t" style="left:478.00px;top:194px;font-size:7.2px;color:#666;letter-spacing:0.193px;-webkit-text-stroke:0.25px;">NV bán hàng</span>
<span class="t" style="left:534.50px;top:194px;font-size:7.2px;color:#666;letter-spacing:0.276px;-webkit-text-stroke:0.25px;">Đại lý</span>
<span class="t" style="left:589.50px;top:194px;font-size:7.2px;color:#666;letter-spacing:0.070px;-webkit-text-stroke:0.25px;">NV Gọi điện</span>
<span class="t" style="left:644.00px;top:194px;font-size:7.2px;color:#666;letter-spacing:0.292px;-webkit-text-stroke:0.25px;">Nguồn</span>
<span class="t" style="left:698.50px;top:194px;font-size:7.2px;color:#666;letter-spacing:0.159px;-webkit-text-stroke:0.25px;">Loại nhu cầu</span>
<span class="t" style="left:754.00px;top:194px;font-size:7.2px;color:#666;letter-spacing:0.203px;-webkit-text-stroke:0.25px;">Ngày hành động</span>
<span class="t" style="left:816.50px;top:194px;font-size:7.2px;color:#666;letter-spacing:0.186px;-webkit-text-stroke:0.25px;">Bước tiếp theo</span>
<span class="t" style="left:875.00px;top:194px;font-size:7.2px;color:#666;-webkit-text-stroke:0.25px;">Gặp Khách</span>
<span class="t" style="left:937.50px;top:194px;font-size:7.2px;color:#666;letter-spacing:0.125px;-webkit-text-stroke:0.25px;">Hẹn</span>
<span class="t" style="left:354.55px;top:212px;font-size:7px;color:#666;">1</span>
<span class="t" style="left:369.00px;top:212px;font-size:7px;color:#3a7bd5;font-weight:700;letter-spacing:-0.181px;">CRM</span>
<span class="t" style="left:423.50px;top:212px;font-size:7px;color:#666;letter-spacing:0.137px;">Engagement</span>
<span class="t" style="left:478.00px;top:212px;font-size:7px;color:#666;letter-spacing:0.035px;">Phan Việt Bằng</span>
<span class="t" style="left:535.00px;top:212px;font-size:7px;color:#666;letter-spacing:-0.433px;">SOGO</span>
<span class="t" style="left:644.00px;top:212px;font-size:7px;color:#666;letter-spacing:0.044px;">WOM</span>
<span class="t" style="left:698.50px;top:212px;font-size:7px;color:#666;letter-spacing:0.194px;">New</span>
<span class="t" style="left:763.00px;top:212px;font-size:7px;color:#666;letter-spacing:0.206px;">02/03/2021</span>
<span class="t" style="left:944.50px;top:211px;font-size:7px;color:#4a89dc;letter-spacing:0.180px;">Đặt hẹn</span>
<span class="t" style="left:987.00px;top:212px;font-size:7px;color:#fff;letter-spacing:-0.210px;">Chọn</span>
<span class="t" style="left:968.20px;top:175px;font-size:6.9px;color:#fff;font-weight:700;letter-spacing:-0.349px;">Thêm nhu cầu</span>
<span class="t" style="left:366.60px;top:244px;font-size:8.7px;color:#5a5a5a;letter-spacing:0.211px;-webkit-text-stroke:0.25px;">Write comment</span>
<span class="t" style="left:357.50px;top:272px;font-size:7.2px;color:#585858;letter-spacing:0.118px;-webkit-text-stroke:0.25px;">Khách hàng</span>
<span class="t" style="left:399.13px;top:272px;font-size:7px;color:#e33;">*</span>
<span class="t" style="left:362.30px;top:288px;font-size:7px;color:#555;letter-spacing:-0.118px;">ILA VIỆT NAM - CÔNG TY TNHH</span>
<span class="t" style="left:525.00px;top:272px;font-size:7.2px;color:#585858;letter-spacing:0.186px;-webkit-text-stroke:0.25px;">Bước tiếp theo</span>
<span class="t" style="left:530.00px;top:288px;font-size:7px;color:#999;letter-spacing:0.154px;">Chọn bước tiếp theo</span>
<span class="t" style="left:364.60px;top:315px;font-size:7px;color:#aaa;letter-spacing:0.066px;">Ghi chú...</span>
<span class="t" style="left:946.50px;top:354px;font-size:7.4px;color:#fff;letter-spacing:-0.269px;-webkit-text-stroke:0.2px;">Lưu</span>
<span class="t" style="left:983.00px;top:354px;font-size:7px;color:#777;letter-spacing:0.330px;">Hủy bỏ</span>
<span class="t" style="left:356.50px;top:384px;font-size:8.3px;color:#555;letter-spacing:0.041px;">Lịch sử</span>
<span class="t" style="left:500.50px;top:426px;font-size:7px;color:#444;font-weight:700;letter-spacing:-0.181px;">Lọc</span>
<span class="t" style="left:525.00px;top:409px;font-size:7.2px;color:#585858;letter-spacing:0.171px;-webkit-text-stroke:0.25px;">Khách hàng</span>
<span class="t" style="left:530.00px;top:426px;font-size:7px;color:#999;letter-spacing:0.143px;">All person</span>
<span class="t" style="left:692.50px;top:409px;font-size:7.2px;color:#585858;letter-spacing:0.132px;-webkit-text-stroke:0.25px;">Sản phẩm đang mở</span>
<span class="t" style="left:697.50px;top:426px;font-size:7px;color:#999;letter-spacing:0.009px;">Tất cả</span>
<span class="t" style="left:859.50px;top:409px;font-size:7.2px;color:#585858;letter-spacing:0.177px;-webkit-text-stroke:0.25px;">Sản phẩm đã đóng</span>
<span class="t" style="left:864.50px;top:426px;font-size:7px;color:#999;letter-spacing:0.009px;">Tất cả</span>
<span class="t" style="left:976.00px;top:454px;font-size:7px;color:#4a89dc;letter-spacing:0.125px;">Thu gọn</span>
<span class="t" style="left:362.20px;top:452px;font-size:7.2px;color:#555;letter-spacing:-0.093px;">02-03-2021</span>
<span class="t" style="left:403.00px;top:478px;font-size:8.7px;color:#29a9e0;font-weight:700;letter-spacing:-0.224px;">Super Admin</span>
<span class="t" style="left:457.30px;top:479px;font-size:7.2px;color:#777;letter-spacing:-0.099px;font-style:italic;">Assign to EC/EP</span>
<span class="t" style="left:983.00px;top:478px;font-size:6.8px;color:#777;letter-spacing:0.056px;font-style:italic;">at 10:28</span>
<!-- logo pin -->
<svg id="pin" style="left:20.2px;top:6.4px;width:11.6px;height:15.6px" viewBox="0 0 11.6 15.6"><path fill="#19aae8" d="M5.800 0a5.800 5.800 0 015.800 5.800c0 3.200-2.500 5.200-4.200 7.500L5.800 15.600 4.200 13.300C2.500 11 0 9 0 5.800A5.800 5.800 0 015.800 0z"/><circle cx="5.800" cy="6.400" r="3" fill="#fff"/><circle cx="5.800" cy="6.400" r="1.350" fill="#19aae8"/></svg>

</body>
</html>
